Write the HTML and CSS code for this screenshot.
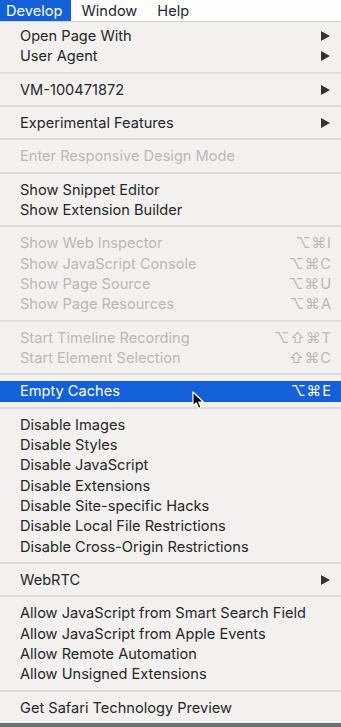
FILE: index.html
```html
<!DOCTYPE html>
<html>
  <head>
    <title>Develop menu</title>
    <link rel="stylesheet" href="styles.css">
  </head>
  <body>
    <div class="menubar">
      <span class="menubar-item open">Develop</span>
      <span class="menubar-item">Window</span>
      <span class="menubar-item">Help</span>
    </div>
    <div class="menu">
      <div class="item">Open Page With<span class="arrow"></span></div>
      <div class="item">User Agent<span class="arrow"></span></div>
      <div class="sep"></div>
      <div class="item">VM-100471872<span class="arrow"></span></div>
      <div class="sep"></div>
      <div class="item">Experimental Features<span class="arrow"></span></div>
      <div class="sep"></div>
      <div class="item off">Enter Responsive Design Mode</div>
      <div class="sep"></div>
      <div class="item">Show Snippet Editor</div>
      <div class="item">Show Extension Builder</div>
      <div class="sep"></div>
      <div class="item off">Show Web Inspector<span class="key">⌥⌘I</span></div>
      <div class="item off">Show JavaScript Console<span class="key">⌥⌘C</span></div>
      <div class="item off">Show Page Source<span class="key">⌥⌘U</span></div>
      <div class="item off">Show Page Resources<span class="key">⌥⌘A</span></div>
      <div class="sep"></div>
      <div class="item off">Start Timeline Recording<span class="key">⌥⇧⌘T</span></div>
      <div class="item off">Start Element Selection<span class="key">⇧⌘C</span></div>
      <div class="sep"></div>
      <div class="item active">
        Empty Caches<span class="key">⌥⌘E</span>
        <svg class="cursor" width="14" height="20" viewBox="0 0 14 20">
          <path d="M1 1 L1 15 L4.3 11.8 L6.6 17.2 L9 16.2 L6.8 11 L11.4 11 Z" fill="#000" stroke="#fff" stroke-width="1.2" stroke-linejoin="round" />
        </svg>
      </div>
      <div class="sep"></div>
      <div class="item">Disable Images</div>
      <div class="item">Disable Styles</div>
      <div class="item">Disable JavaScript</div>
      <div class="item">Disable Extensions</div>
      <div class="item">Disable Site-specific Hacks</div>
      <div class="item">Disable Local File Restrictions</div>
      <div class="item">Disable Cross-Origin Restrictions</div>
      <div class="sep"></div>
      <div class="item">WebRTC<span class="arrow"></span></div>
      <div class="sep"></div>
      <div class="item">Allow JavaScript from Smart Search Field</div>
      <div class="item">Allow JavaScript from Apple Events</div>
      <div class="item">Allow Remote Automation</div>
      <div class="item">Allow Unsigned Extensions</div>
      <div class="sep"></div>
      <div class="item">Get Safari Technology Preview</div>
    </div>
  </body>
</html>
```

FILE: styles.css
```css
body {
  margin: 0;
  background: #6e6e6e;
  font-family: Inter, "Noto Sans", "DejaVu Sans", sans-serif;
  font-size: 14.6px;
  color: #262626;
  overflow: hidden;
}
.menubar {
  display: flex;
  height: 21px;
  background: #fdfdfd;
  border-bottom: 1px solid #d6d6d6;
  line-height: 22px;
}
.menubar-item {
  padding: 0 10px;
}
.menubar-item.open {
  padding: 0 9px 0 6px;
  background: #1360d8;
  color: #fff;
}
.menu {
  background: #f2f1f0;
  padding: 4px 0 5px;
  box-shadow: 0 3px 4px rgba(0, 0, 0, 0.35);
}
.item {
  position: relative;
  display: flex;
  align-items: center;
  justify-content: space-between;
  height: 20.33px;
  padding: 0 9px 0 20px;
}
.item.off {
  color: #bab8b5;
}
.item.active {
  background: #1360d8;
  color: #fff;
}
.key {
  letter-spacing: 1px;
}
.arrow {
  width: 0;
  height: 0;
  margin-right: 2px;
  border-top: 5px solid transparent;
  border-bottom: 5px solid transparent;
  border-left: 9px solid #333;
}
.sep {
  height: 2px;
  margin: 5px 0 6px;
  background: #dcdbd9;
}
.cursor {
  position: absolute;
  left: 192px;
  top: 10px;
}
```
